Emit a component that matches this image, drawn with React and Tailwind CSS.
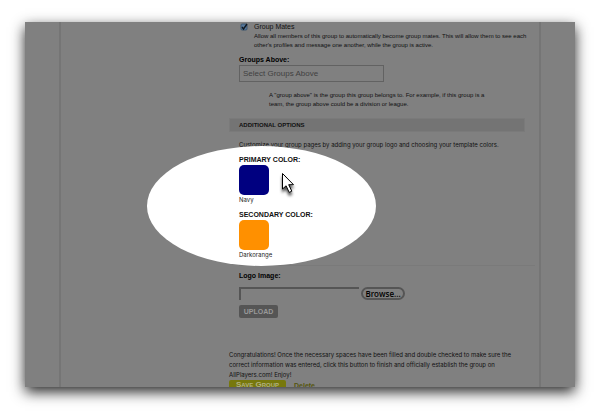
function Cursor() {
  return (
    <svg className="overflow-visible" width="14" height="22" viewBox="0 0 14 22" aria-hidden="true">
      <defs>
        <filter id="cursor-shadow" x="-50%" y="-50%" width="250%" height="250%">
          <feDropShadow dx="0" dy="3" stdDeviation="1.5" floodColor="#000" floodOpacity="0.7" />
        </filter>
      </defs>
      <path
        d="M0.5 0.5v15.5l3.6-3.2 3.1 6.6 2.6-1.2-3.1-6.5h4.8z"
        fill="#fff"
        stroke="#000"
        strokeWidth="1"
        filter="url(#cursor-shadow)"
      />
    </svg>
  );
}

function Swatch({ title, name, color }) {
  return (
    <div>
      <h3 className="text-[7px] leading-[10px] font-bold text-[#111]">{title}</h3>
      <button type="button" aria-label={name} className={`block size-[30px] rounded-[5px] ${color}`} />
      <p className="font-[Inter,sans-serif] text-[6px] leading-[10px] text-[#222]">{name}</p>
    </div>
  );
}

export default function App() {
  return (
    <main className="bg-white px-[25px] pt-[22px] pb-[33px] font-['Liberation_Sans',Arial,sans-serif] text-[#111]">
      <div className="h-[365px] overflow-clip bg-[#808080] px-[34px] shadow-[0_5px_13px_0px_rgba(0,0,0,0.85)]">
        <form className="relative h-full border-x-2 border-[#757575] pl-[168px] whitespace-nowrap" onSubmit={(e) => e.preventDefault()}>
          <section className="pl-[10px]">
            <label className="flex h-[10px] items-center gap-[6px] text-[7px]">
              <input type="checkbox" defaultChecked className="sr-only" />
              <svg className="h-[9px] w-[9px]" viewBox="0 0 9 9" aria-hidden="true">
                <rect x="2" y="1" width="6" height="6" rx="1" fill="#58789a" stroke="#2f4d6b" strokeWidth="0.8" />
                <path d="M3 4l1.5 2L8 1" fill="none" stroke="#101820" strokeWidth="1.4" />
              </svg>
              Group Mates
            </label>
            <p className="pl-[15px] text-[6px] leading-[9px]">
              Allow all members of this group to automatically become group mates. This will allow them to see each
              <br />
              other's profiles and message one another, while the group is active.
            </p>
            <label htmlFor="above" className="mt-[5px] block text-[7px] leading-[10px] font-bold text-black">Groups Above:</label>
            <input
              id="above"
              placeholder="Select Groups Above"
              className="block h-[17px] w-[145px] border border-[#626262] bg-transparent px-[3px] text-[8px] placeholder:text-[#404040]"
            />
            <p className="mt-[9px] pl-[30px] text-[6px] leading-[9px]">
              A "group above" is the group this group belongs to. For example, if this group is a
              <br />
              team, the group above could be a division or league.
            </p>
          </section>
          <h2 className="mt-[9px] mr-[14px] h-[14px] border border-[#7a7a7a] bg-[#747474] pl-[9px] text-[6px] leading-[12px] font-bold text-[#111]">
            ADDITIONAL OPTIONS
          </h2>
          <p className="mt-[8px] pl-[10px] font-[Inter,sans-serif] text-[6px] leading-[10px]">
            Customize your group pages by adding your group logo and choosing your template colors.
          </p>
          <div className="absolute top-[124px] left-[86px] h-[120px] w-[229px] rounded-[50%] bg-white" />
          <section className="relative mt-[5px] flex flex-col gap-[5px] pl-[10px]">
            <Swatch title="PRIMARY COLOR:" name="Navy" color="bg-[#000080]" />
            <Swatch title="SECONDARY COLOR:" name="Darkorange" color="bg-[#ff9000]" />
            <div className="absolute top-[18px] left-[53px]"><Cursor /></div>
          </section>
          <section className="mt-[5px] mr-[4px] ml-[10px] border-t border-[#7a7a7a] pt-[5px]">
            <label htmlFor="logo" className="block text-[7px] leading-[10px] font-bold text-black">Logo Image:</label>
            <div className="mt-[6px] flex items-center gap-[2px]">
              <input id="logo" className="h-[13px] w-[120px] border-t-2 border-l-2 border-[#555] bg-transparent" />
              <button type="button" className="h-[13px] w-[44px] rounded-full border-2 border-[#555] font-['Open_Sans',sans-serif] text-[8px] leading-[9px] font-semibold text-black">
                Browse...
              </button>
            </div>
            <button type="button" className="mt-[5px] block h-[13px] w-[39px] rounded-[2px] bg-[#555] text-[7px] leading-[13px] font-bold text-[#999]">
              UPLOAD
            </button>
          </section>
          <p className="mt-[32px] font-[Inter,sans-serif] text-[6px] leading-[10px]">
            Congratulations! Once the necessary spaces have been filled and double checked to make sure the
            <br />
            correct information was entered, click this button to finish and officially establish the group on
            <br />
            AllPlayers.com! Enjoy!
          </p>
          <div className="flex items-start gap-[8px]">
            <button type="submit" className="flex h-[14px] w-[57px] shrink-0 items-start justify-center rounded-[2px] bg-[#77780c] text-[8px] leading-[10px] font-bold text-[#b0b080] [font-variant:small-caps]">
              Save Group
            </button>
            <a href="#delete" className="text-[7px] leading-[11px] font-bold text-[#55550d]">Delete</a>
          </div>
        </form>
      </div>
    </main>
  );
}
